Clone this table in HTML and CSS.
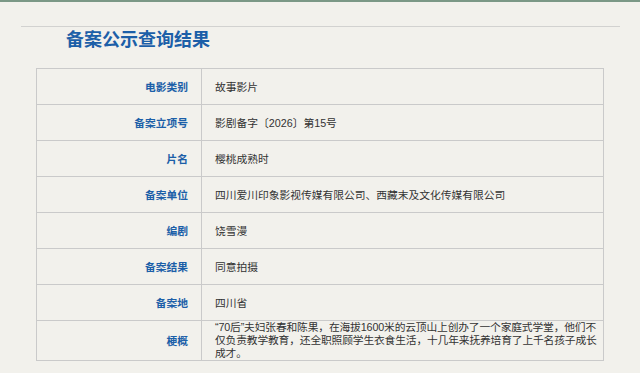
FILE: index.html
```html
<!DOCTYPE html>
<html lang="zh">
<head>
<meta charset="utf-8">
<title>备案公示查询结果</title>
<link rel="stylesheet" href="styles.css">
</head>
<body>
<div class="topbar"></div>
<div class="rule"></div>
<h1 class="title">备案公示查询结果</h1>
<table class="result">
  <tr><th>电影类别</th><td>故事影片</td></tr>
  <tr><th>备案立项号</th><td>影剧备字〔2026〕第15号</td></tr>
  <tr><th>片名</th><td>樱桃成熟时</td></tr>
  <tr><th>备案单位</th><td>四川爱川印象影视传媒有限公司、西藏末及文化传媒有限公司</td></tr>
  <tr><th>编剧</th><td>饶雪漫</td></tr>
  <tr><th>备案结果</th><td>同意拍摄</td></tr>
  <tr><th>备案地</th><td>四川省</td></tr>
  <tr class="long"><th>梗概</th><td>“70后”夫妇张春和陈果，在海拔1600米的云顶山上创办了一个家庭式学堂，他们不仅负责教学教育，还全职照顾学生衣食生活，十几年来抚养培育了上千名孩子成长成才。</td></tr>
</table>
</body>
</html>
```
FILE: styles.css
```css
html, body {
  margin: 0;
  padding: 0;
}
body {
  background: #f2f1ec;
  font-family: "Liberation Sans", "Noto Sans CJK SC", sans-serif;
  font-size: 10.75px;
  color: #333;
}
.topbar {
  height: 2px;
  background: #7b9886;
}
.rule {
  margin: 24px 20px 0 21px;
  border-top: 1px solid #d2d2d0;
}
.title {
  margin: 1px 0 0 66px;
  font-size: 18px;
  line-height: 24px;
  font-weight: bold;
  color: #1c5fa8;
}
.result {
  margin: 16px 0 0 36px;
  width: 568px;
  border-collapse: collapse;
  table-layout: fixed;
}
.result th,
.result td {
  border: 1px solid #cacaca;
  height: 35px;
  padding: 0;
  vertical-align: middle;
}
.result th {
  width: 151px;
  padding-right: 13px;
  text-align: right;
  font-weight: bold;
  color: #1c5fa8;
}
.result td {
  padding-left: 13px;
  padding-right: 0;
  text-align: left;
}
.result .long th,
.result .long td {
  height: auto;
}
.result .long td {
  line-height: 13px;
  letter-spacing: -0.15px;
  padding-top: 0;
  padding-bottom: 0;
}
```
